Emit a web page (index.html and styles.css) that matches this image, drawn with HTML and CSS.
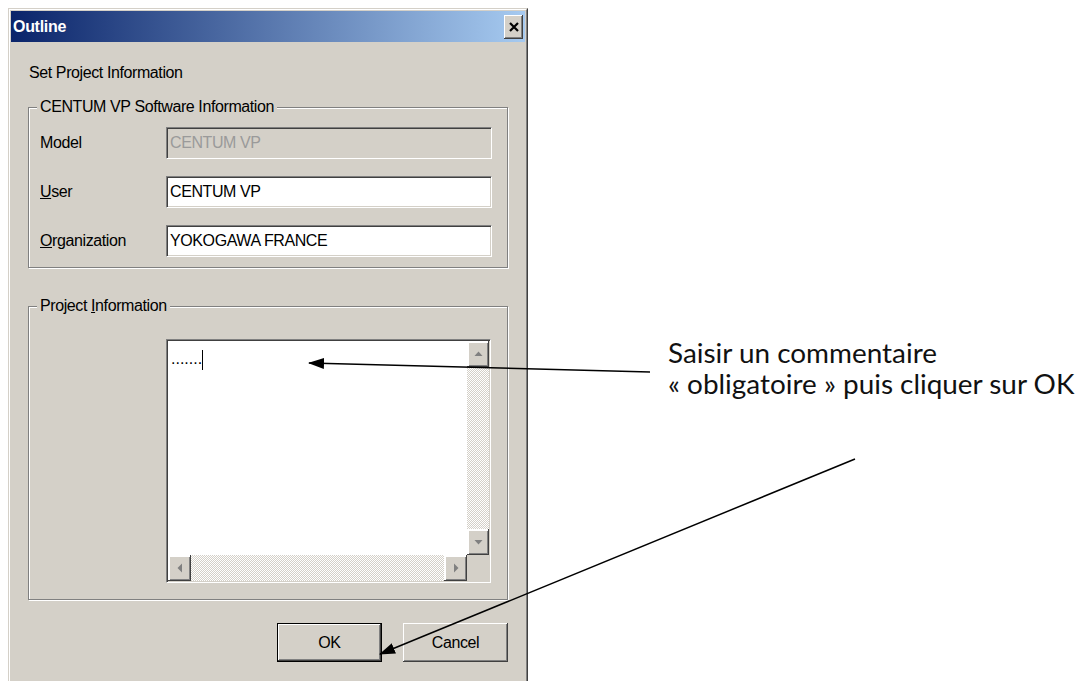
FILE: index.html
```html
<!DOCTYPE html>
<html lang="fr">
<head>
<meta charset="utf-8">
<title>Outline</title>
<link rel="stylesheet" href="styles.css">
</head>
<body>
<div class="page">
  <div class="dialog">
    <div class="frame">
      <div class="titlebar">
        <span class="title">Outline</span>
        <span class="close">
          <svg width="10" height="10" viewBox="0 0 10 10"><path d="M1 1 L9 9 M9 1 L1 9" stroke="#000" stroke-width="2.2" fill="none"/></svg>
        </span>
      </div>
      <div class="body">
        <div class="heading">Set Project Information</div>

        <fieldset class="group group-software">
          <legend>CENTUM VP Software Information</legend>
          <div class="row">
            <span class="label">Model</span>
            <div class="field disabled">CENTUM VP</div>
          </div>
          <div class="row">
            <span class="label"><u>U</u>ser</span>
            <div class="field">CENTUM VP</div>
          </div>
          <div class="row">
            <span class="label"><u>O</u>rganization</span>
            <div class="field">YOKOGAWA FRANCE</div>
          </div>
        </fieldset>

        <fieldset class="group group-project">
          <legend>Project <u>I</u>nformation</legend>
          <div class="memo">
            <div class="memo-text"><span class="dots">.......</span><span class="caret"></span></div>
            <div class="vscroll">
              <div class="sbtn"><svg width="9" height="6" viewBox="0 0 9 6"><path d="M4.5 0.5 L8.5 5 L0.5 5 Z" fill="#808080"/></svg></div>
              <div class="track"></div>
              <div class="sbtn"><svg width="9" height="6" viewBox="0 0 9 6"><path d="M0.5 1 L8.5 1 L4.5 5.5 Z" fill="#808080"/></svg></div>
            </div>
            <div class="hscroll">
              <div class="sbtn"><svg width="6" height="10" viewBox="0 0 6 10"><path d="M0.5 5 L5 0.5 L5 9.5 Z" fill="#808080"/></svg></div>
              <div class="track"></div>
              <div class="sbtn"><svg width="6" height="10" viewBox="0 0 6 10"><path d="M1 0.5 L5.5 5 L1 9.5 Z" fill="#808080"/></svg></div>
            </div>
            <div class="corner"></div>
          </div>
        </fieldset>

        <div class="buttons">
          <div class="btn default">OK</div>
          <div class="btn">Cancel</div>
        </div>
      </div>
    </div>
  </div>

  <div class="note">Saisir un commentaire<br>« obligatoire » puis cliquer sur OK</div>

  <svg class="arrows" width="1082" height="681" viewBox="0 0 1082 681">
    <defs>
      <marker id="head" markerUnits="userSpaceOnUse" viewBox="0 0 16 11" markerWidth="16" markerHeight="11" refX="15" refY="5.5" orient="auto">
        <path d="M0 0 L16 5.5 L0 11 Z" fill="#000"/>
      </marker>
    </defs>
    <line x1="650" y1="372" x2="309" y2="363" stroke="#000" stroke-width="1.5" marker-end="url(#head)"/>
    <line x1="855" y1="459" x2="380" y2="654" stroke="#000" stroke-width="1.5" marker-end="url(#head)"/>
  </svg>
</div>
</body>
</html>
```

FILE: styles.css
```css
html, body {
  margin: 0;
  background: #fff;
}

body {
  font-family: "Liberation Sans Narrow", "Liberation Sans", Arial, sans-serif;
  font-size: 16px;
  letter-spacing: -0.4px;
  color: #000;
}

.page {
  position: relative;
  width: 1082px;
  height: 681px;
  overflow: hidden;
}

/* Classic raised window frame */
.dialog {
  margin: 8px 0 0 8px;
  width: 520px;
  height: 700px;
  box-sizing: border-box;
  background: #d4d0c8;
  border: 1px solid;
  border-color: #d4d0c8 #404040 #404040 #d4d0c8;
}

.frame {
  height: 100%;
  box-sizing: border-box;
  border: 1px solid;
  border-color: #fff #808080 #808080 #fff;
  padding: 1px;
}

.titlebar {
  height: 31px;
  background: linear-gradient(to right, #0a246a, #a6caf0);
  display: flex;
  align-items: center;
  justify-content: space-between;
  padding: 0 2px 0 2px;
}

.title {
  color: #fff;
  font-weight: bold;
  font-size: 16px;
  letter-spacing: -0.3px;
}

.close {
  width: 19px;
  height: 24px;
  box-sizing: border-box;
  background: #d4d0c8;
  box-shadow: inset -1px -1px #404040, inset 1px 1px #fff, inset -2px -2px #808080;
  display: flex;
  align-items: center;
  justify-content: center;
}

.body {
  padding: 0 17px;
}

.heading {
  margin-top: 21px;
  padding-left: 1px;
  line-height: 20px;
}

/* Etched group boxes */
.group {
  margin: 14px 0 0;
  min-width: 0;
  border: 1px solid #808080;
  box-shadow: 1px 1px 0 #fff, inset 1px 1px 0 #fff;
}

.group legend {
  padding: 0 3px;
  margin-left: -3px;
  line-height: 20px;
  background: #d4d0c8;
}

.group-software {
  padding: 10px 14px 10px 11px;
}

.group-project {
  margin-top: 28px;
  padding: 23px 15px 16px 11px;
}

.row {
  display: flex;
  align-items: center;
  height: 32px;
}

.row + .row {
  margin-top: 17px;
}

.label {
  width: 126px;
}

/* Sunken edit fields */
.field {
  box-sizing: border-box;
  width: 326px;
  height: 32px;
  padding: 2px 0 0 3px;
  line-height: 26px;
  background: #fff;
  border: 1px solid;
  border-color: #808080 #fff #fff #808080;
  box-shadow: inset 1px 1px #404040, inset -1px -1px #d4d0c8;
}

.field.disabled {
  background: #d4d0c8;
  color: #9a9a9a;
}

.memo {
  box-sizing: border-box;
  width: 325px;
  height: 244px;
  margin-left: 126px;
  border: 1px solid;
  border-color: #808080 #fff #fff #808080;
  box-shadow: inset 1px 1px #404040, inset -1px -1px #d4d0c8;
  padding: 1px;
  display: grid;
  grid-template-columns: 1fr 22px;
  grid-template-rows: 1fr 26px;
}

.memo-text {
  background: #fff;
  padding: 8px 0 0 3px;
  display: flex;
  align-items: flex-start;
  line-height: 20px;
}

.dots {
  font-size: 16px;
  letter-spacing: 0;
}

.caret {
  display: inline-block;
  width: 1px;
  height: 20px;
  margin-top: 1px;
  background: #000;
}

.vscroll {
  display: flex;
  flex-direction: column;
}

.hscroll {
  display: flex;
}

.track {
  flex: 1;
  background: repeating-conic-gradient(#d4d0c8 0 25%, #fff 0 50%) 0 0 / 2px 2px;
}

.sbtn {
  flex: none;
  width: 22px;
  height: 26px;
  box-sizing: border-box;
  background: #d4d0c8;
  box-shadow: inset -1px -1px #404040, inset 2px 2px #fff, inset -2px -2px #808080;
  display: flex;
  align-items: center;
  justify-content: center;
}

.hscroll .sbtn {
  width: 23px;
}

.corner {
  background: #d4d0c8;
}

.buttons {
  display: flex;
  justify-content: flex-end;
  gap: 21px;
  margin-top: 23px;
}

.btn {
  width: 105px;
  height: 39px;
  box-sizing: border-box;
  background: #d4d0c8;
  display: flex;
  align-items: center;
  justify-content: center;
  box-shadow: inset -1px -1px #404040, inset 1px 1px #fff, inset -2px -2px #808080;
}

.btn.default {
  border: 1px solid #000;
}

/* Callout */
.note {
  position: absolute;
  left: 668px;
  top: 337px;
  font-family: Lato, "Open Sans", sans-serif;
  font-size: 27.9px;
  line-height: 31px;
  letter-spacing: 0;
  color: #111;
  white-space: nowrap;
}

.arrows {
  position: absolute;
  left: 0;
  top: 0;
  pointer-events: none;
}
```
